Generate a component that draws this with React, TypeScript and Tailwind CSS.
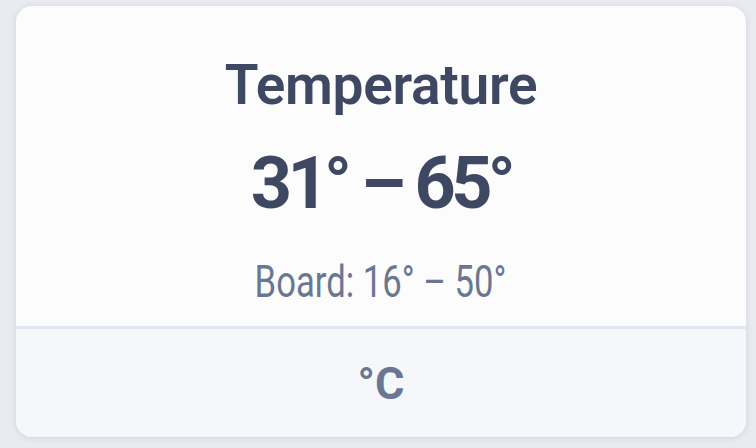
export default function App() {
    return (
        <div className="flex h-[448px] w-[756px] bg-[#e9ebf1] pt-[6px] pr-[10px] pb-[11px] pl-4" style={{ fontFamily: 'Roboto, "Liberation Sans", sans-serif' }}>
            <div className="flex flex-1 flex-col overflow-hidden rounded-2xl bg-[#fcfcfd] shadow-[0_1px_6px_rgba(60,70,100,0.14)]">
                {/* Values */}
                <div className="flex h-[320px] flex-col items-center pt-[52px]">
                    <h1 className="text-[55px] leading-[55px] font-semibold tracking-[-0.005em] text-[#3e4862]">Temperature</h1>
                    <p className="mt-[35px] text-[72px] leading-[72px] font-bold tracking-[-0.065em] text-[#3e4862]">31° – 65°</p>
                    <p className="mt-[39px] inline-block scale-x-[0.77] text-[45px] leading-[45px] whitespace-nowrap text-[#6b7792]">Board: 16° – 50°</p>
                </div>

                {/* Unit */}
                <div className="flex flex-1 items-center justify-center border-t-[3px] border-[#e3e6ee] bg-[#f5f7fb]">
                    <span className="text-[45px] leading-[45px] font-bold text-[#6b7792]">°C</span>
                </div>
            </div>
        </div>
    );
}
